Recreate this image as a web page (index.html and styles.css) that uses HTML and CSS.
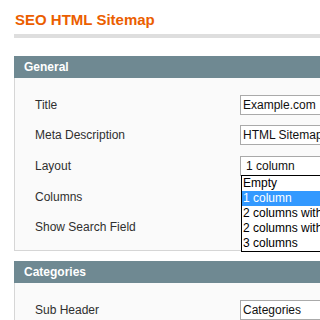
FILE: index.html
```html
<!DOCTYPE html>
<html>
<head>
<meta charset="utf-8">
<link rel="stylesheet" href="styles.css">
</head>
<body>
<div class="page">
  <h1 class="page-title">SEO HTML Sitemap</h1>
  <div class="rule"></div>

  <div class="section">
    <div class="section-head">General</div>
    <div class="section-body">
      <div class="row"><span class="label">Title</span><div class="field"><span class="input">Example.com</span></div></div>
      <div class="row"><span class="label">Meta Description</span><div class="field"><span class="input">HTML Sitemap</span></div></div>
      <div class="row row-select"><span class="label">Layout</span>
        <div class="field">
          <span class="select">1 column</span>
          <div class="dropdown">
            <div class="option">Empty</div>
            <div class="option selected">1 column</div>
            <div class="option">2 columns with left bar</div>
            <div class="option">2 columns with right bar</div>
            <div class="option">3 columns</div>
          </div>
        </div>
      </div>
      <div class="row"><span class="label">Columns</span><div class="field"></div></div>
      <div class="row"><span class="label">Show Search Field</span><div class="field"></div></div>
    </div>
  </div>

  <div class="section section-second">
    <div class="section-head">Categories</div>
    <div class="section-body">
      <div class="row"><span class="label">Sub Header</span><div class="field"><span class="input">Categories</span></div></div>
    </div>
  </div>
</div>
</body>
</html>
```

FILE: styles.css
```css
html, body {
  margin: 0;
  padding: 0;
  background: #ffffff;
  overflow: hidden;
}
body {
  width: 320px;
  height: 320px;
  font-family: "Liberation Sans", Arial, sans-serif;
  font-size: 12px;
  color: #2f2f2f;
}
.page {
  width: 420px;
  padding-left: 14px;
}
.page-title {
  margin: 0;
  padding: 11px 0 0 1px;
  font-size: 15px;
  line-height: 18px;
  font-weight: bold;
  color: #eb5e00;
}
.rule {
  margin-top: 5px;
  height: 4px;
  background: #dedede;
}
.section {
  margin-top: 18px;
}
.section-second {
  margin-top: 10px;
}
.section-head {
  height: 22px;
  line-height: 22px;
  padding-left: 10px;
  background: #6f8992;
  color: #ffffff;
  font-weight: bold;
  font-size: 12px;
}
.section-body {
  background: #fafafa;
  border-left: 1px solid #d6d6d6;
  border-bottom: 1px solid #d6d6d6;
  padding: 12px 0 8px 20px;
}
.row {
  display: flex;
  align-items: center;
  height: 30px;
}
.row-select {
  height: 32px;
}
.label {
  width: 205px;
  flex: none;
}
.field {
  position: relative;
  flex: 1;
  height: 20px;
}
.input {
  display: block;
  box-sizing: border-box;
  height: 20px;
  line-height: 18px;
  border: 1px solid #aaaaaa;
  background: #ffffff;
  padding-left: 2px;
  color: #111111;
  white-space: nowrap;
}
.select {
  display: block;
  box-sizing: border-box;
  height: 20px;
  line-height: 18px;
  border: 1px solid #a9a9a9;
  background: #ffffff;
  padding-left: 5px;
  color: #111111;
  white-space: nowrap;
}
.dropdown {
  position: absolute;
  left: 1px;
  top: 19px;
  width: 200px;
  border: 1px solid #000000;
  background: #ffffff;
  z-index: 5;
}
.option {
  height: 15px;
  line-height: 15px;
  padding-left: 1px;
  color: #000000;
  white-space: nowrap;
}
.option.selected {
  background: #3399ff;
  color: #ffffff;
}
```
